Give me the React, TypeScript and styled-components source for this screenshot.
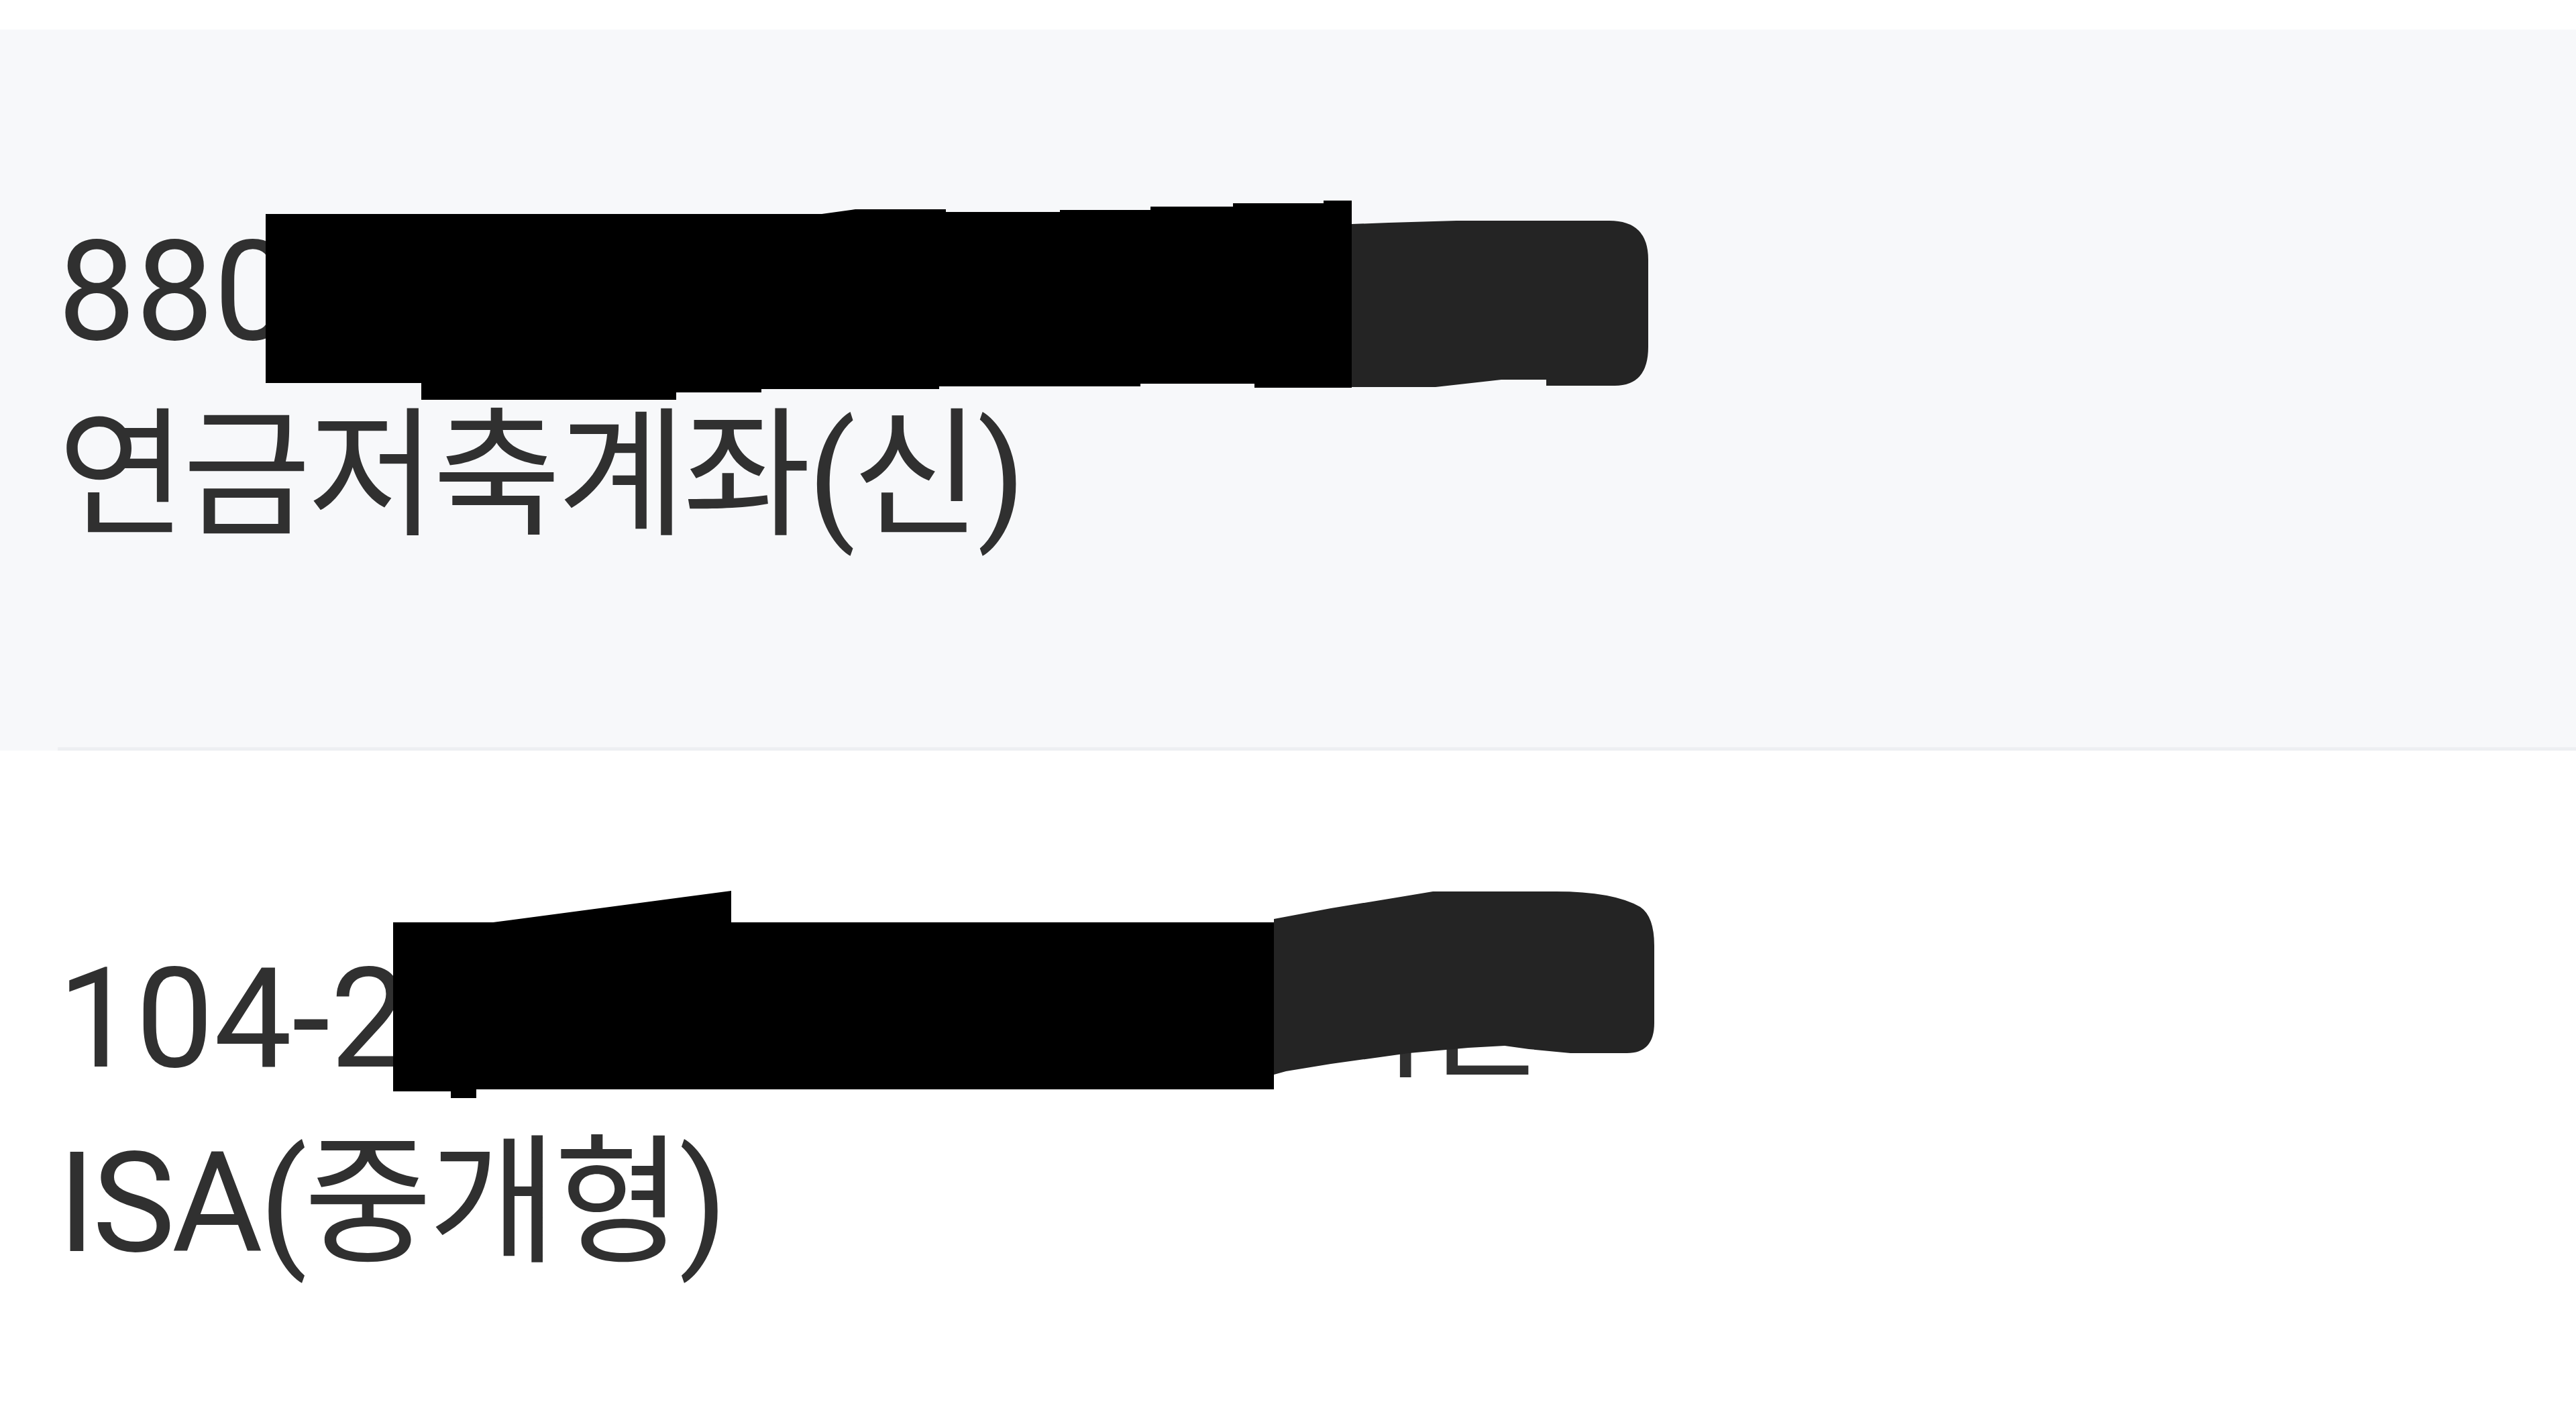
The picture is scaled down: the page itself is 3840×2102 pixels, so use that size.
import styled, { createGlobalStyle } from 'styled-components';

const GlobalStyle = createGlobalStyle`
  html, body {
    margin: 0;
    padding: 0;
    background: #ffffff;
  }
  body {
    font-family: Roboto, 'Noto Sans CJK KR', sans-serif;
    color: #303030;
  }
`;

type Account = {
  number: string;
  tail?: string;
  tailGap?: number;
  kind: string;
  bg: string;
  padTop: number;
  top: number;
  height: number;
  redactions: { d: string; fill: string }[];
};

// 가려진 계좌번호 부분 (검은/회색 마스킹) 은 화면 좌표 그대로 path로 그림
const accounts: Account[] = [
  {
    number: '880',
    kind: '연금저축계좌(신)',
    bg: '#f7f8fa',
    padTop: 252,
    top: 44,
    height: 1071,
    redactions: [
      {
        d: 'M396 319 H1225 L1275 312 H1410 V316 H1580 V313 H1715 V308 H1838 V303 H1973 V299 H2015 V578 H1870 V572 H1700 V576 H1400 V580 H1135 V585 H1008 V596 H628 V571 H396 Z',
        fill: '#000000',
      },
      {
        d: 'M2015 334 L2070 332 L2171 329 H2399 Q2457 329 2457 387 V517 Q2457 575 2407 575 H2305 V566 H2238 L2140 577 H2015 Z',
        fill: '#242424',
      },
    ],
  },
  {
    number: '104-2',
    tail: '지신',
    tailGap: 1337,
    kind: 'ISA(중개형)',
    bg: '#ffffff',
    padTop: 244,
    top: 1119,
    height: 983,
    redactions: [
      {
        d: 'M586 1375 H735 L1090 1328 V1375 H1899 V1624 H710 V1637 H672 V1627 H586 Z',
        fill: '#000000',
      },
      {
        d: 'M1899 1370 L1984 1354 L2082 1338 L2136 1329 H2319 Q2405 1329 2445 1352 Q2466 1366 2466 1410 V1525 Q2466 1570 2425 1570 H2341 L2279 1564 L2243 1559 L2189 1562 L2100 1570 L1984 1586 L1917 1597 L1899 1602 Z',
        fill: '#242424',
      },
    ],
  },
];

function App() {
  return (
    <>
      <GlobalStyle />
      <Page>
        {accounts.map((acc, i) => (
          <AccountRow
            key={acc.number}
            $bg={acc.bg}
            $padTop={acc.padTop}
            $height={acc.height}
            $divider={i < accounts.length - 1}
          >
            <AccountNumber>
              {acc.number}
              {acc.tail && (
                <>
                  <HiddenGap $width={acc.tailGap ?? 0} />
                  <Tail>{acc.tail}</Tail>
                </>
              )}
            </AccountNumber>
            <AccountKind>{acc.kind}</AccountKind>
            <Redaction
              viewBox={`0 ${acc.top} 2600 ${acc.height}`}
              width={2600}
              height={acc.height}
            >
              {acc.redactions.map((r) => (
                <path key={r.d} d={r.d} fill={r.fill} />
              ))}
            </Redaction>
          </AccountRow>
        ))}
      </Page>
    </>
  );
}

export default App;

const Page = styled.div`
  display: flex;
  flex-direction: column;
  padding-top: 44px;
  min-height: 2102px;
  box-sizing: border-box;
  overflow: hidden;
`;

const AccountRow = styled.div<{
  $bg: string;
  $padTop: number;
  $height: number;
  $divider: boolean;
}>`
  position: relative;
  display: flex;
  flex-direction: column;
  box-sizing: border-box;
  height: ${({ $height, $divider }) => $height + ($divider ? 4 : 0)}px;
  padding: ${({ $padTop }) => $padTop}px 0 0 86px;
  background: ${({ $bg }) => $bg};

  &::after {
    content: '';
    display: ${({ $divider }) => ($divider ? 'block' : 'none')};
    position: absolute;
    left: 86px;
    right: 0;
    bottom: 0;
    height: 5px;
    background: #edeff2;
  }
`;

const AccountNumber = styled.div`
  font-size: 207px;
  line-height: 280px;
  font-weight: 400;
  white-space: nowrap;
`;

const HiddenGap = styled.span<{ $width: number }>`
  display: inline-block;
  width: ${({ $width }) => $width}px;
`;

const Tail = styled.span`
  font-family: 'Noto Sans CJK KR', sans-serif;
  font-size: 200px;
  letter-spacing: -15px;
`;

const AccountKind = styled.div`
  font-size: 208px;
  line-height: 268px;
  letter-spacing: -5px;
  font-weight: 400;
  white-space: nowrap;
`;

const Redaction = styled.svg`
  position: absolute;
  left: 0;
  top: 0;
  pointer-events: none;
`;
